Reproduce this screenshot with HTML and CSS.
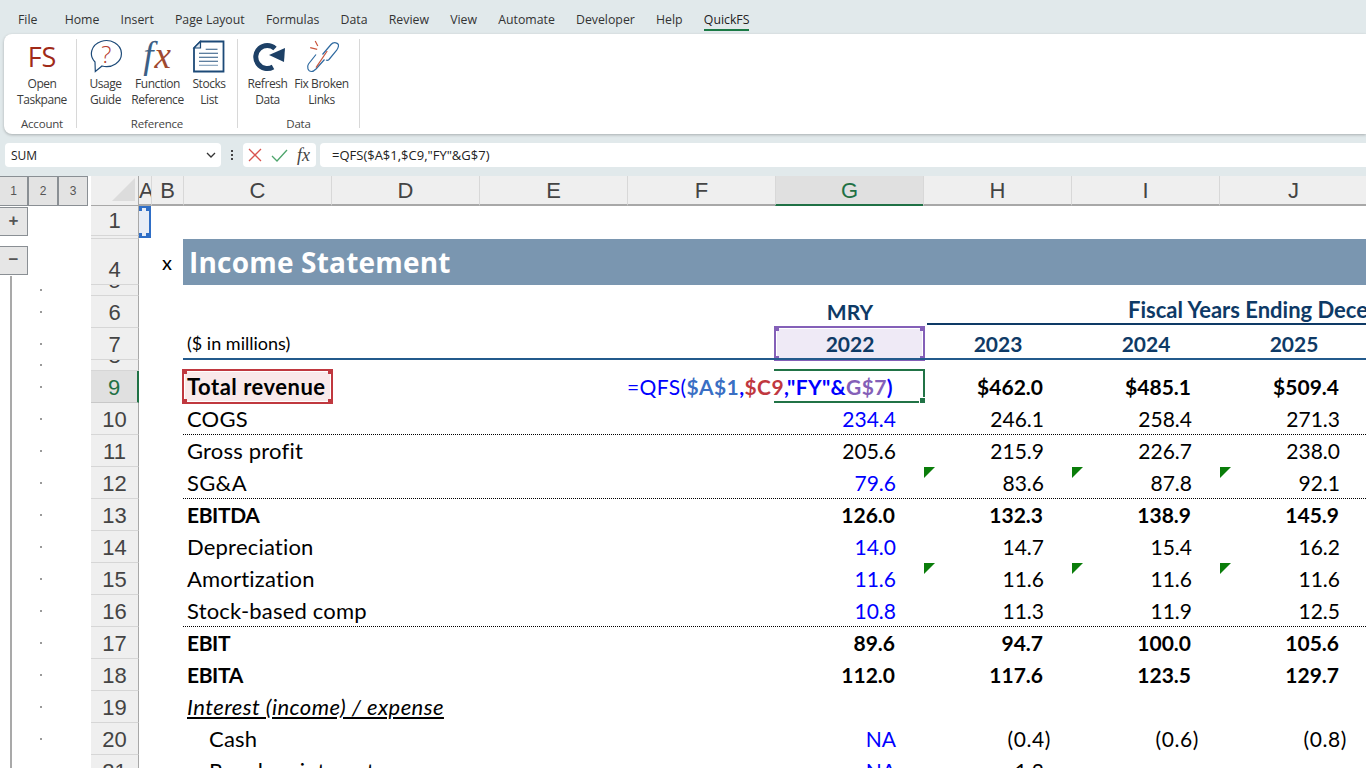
FILE: index.html
```html
<!DOCTYPE html>
<html lang="en">
<head>
<meta charset="utf-8">
<title>Income Statement</title>
<link rel="stylesheet" href="styles.css">
</head>
<body>
<div class="app">
  <nav class="tabs">
    <span class="tab tab-file">File</span><span class="tab">Home</span><span class="tab">Insert</span><span class="tab">Page Layout</span><span class="tab">Formulas</span><span class="tab">Data</span><span class="tab">Review</span><span class="tab">View</span><span class="tab">Automate</span><span class="tab">Developer</span><span class="tab">Help</span><span class="tab tab-active">QuickFS</span>
  </nav>
  <section class="ribbon">
    <div class="group group-account">
      <div class="group-items">
        <div class="rbtn rbtn-open"><span class="icon fs-logo">FS</span><span class="rlabel">Open<br>Taskpane</span></div>
      </div>
      <div class="group-name">Account</div>
    </div>
    <div class="group group-reference">
      <div class="group-items">
        <div class="rbtn rbtn-usage"><span class="icon"><svg width="34" height="34" viewBox="0 0 34 34"><path d="M6 23A15 13 0 1 1 13 27L6.300 32.500Z" fill="#fff" stroke="#1d4a78" stroke-width="1.200"/><text x="17" y="24" class="q-mark">?</text></svg></span><span class="rlabel">Usage<br>Guide</span></div>
        <div class="rbtn rbtn-func"><span class="icon fx-logo"><i class="fx-f">f</i><i class="fx-x">x</i></span><span class="rlabel">Function<br>Reference</span></div>
        <div class="rbtn rbtn-stocks"><span class="icon"><svg width="34" height="34" viewBox="0 0 34 34"><path d="M8.500 2.500H31.500V32.500H2V9Z" fill="#fff" stroke="#1d4a78" stroke-width="1.800"/><path d="M8.500 2.500V9H2Z" fill="#dfe8f0" stroke="#1d4a78" stroke-width="1.200"/><path d="M13.700 10.300H25.500M7 14.300H26M7 18.300H26M7 22.300H26" stroke="#2a5580" stroke-width="1.100"/><path d="M7 26.300H26" stroke="#7f9cb8" stroke-width="1.100"/></svg></span><span class="rlabel">Stocks<br>List</span></div>
      </div>
      <div class="group-name">Reference</div>
    </div>
    <div class="group group-data">
      <div class="group-items">
        <div class="rbtn rbtn-refresh"><span class="icon"><svg width="34" height="34" viewBox="0 0 34 34"><path d="M22 28A11.500 11.500 0 1 1 24 9.500" fill="none" stroke="#1d4066" stroke-width="5"/><path d="M34 9 33 23 18 16Z" fill="#1d4066"/></svg></span><span class="rlabel">Refresh<br>Data</span></div>
        <div class="rbtn rbtn-links"><span class="icon"><svg width="34" height="34" viewBox="0 0 34 34"><g fill="none" stroke="#2f6aa0" stroke-width="1.200"><path d="M17.500 15.500L26 5.500C28.500 2.500 34 3.500 33.500 7C33.300 8.500 32.500 10 31.500 11.500L24 20.500C23 21.500 22 21.500 21 21"/><path d="M11 15.500L3.500 25C1.500 28 3 32.500 6.500 32.500C8.500 32.500 10 31 11 30L19.500 20.500"/></g><path d="M11 28.700L22.200 12" stroke="#c8553d" stroke-width="1.200"/><path d="M5.200 8.700L12.200 10.300M10.200 2L12.800 7" stroke="#c8553d" stroke-width="1.200"/></svg></span><span class="rlabel">Fix Broken<br>Links</span></div>
      </div>
      <div class="group-name">Data</div>
    </div>
  </section>
  <div class="formula-bar">
    <div class="namebox"><span>SUM</span><svg width="10" height="6" viewBox="0 0 10 6"><path d="M1 1l4 4 4-4" fill="none" stroke="#333" stroke-width="1.300"/></svg></div>
    <div class="fb-dots"><b></b><b></b><b></b></div>
    <div class="fb-buttons">
      <svg width="14" height="14" viewBox="0 0 14 14"><path d="M1 1l12 12M13 1L1 13" stroke="#d9534f" stroke-width="1.300" fill="none"/></svg>
      <svg width="17" height="13" viewBox="0 0 17 13"><path d="M1 7l5 5L16 1" stroke="#4ea56c" stroke-width="1.300" fill="none"/></svg>
      <span class="fb-fx">fx</span>
    </div>
    <div class="fb-input">=QFS($A$1,$C9,"FY"&amp;G$7)</div>
  </div>
  <main class="sheet">
    <div class="row row-head">
      <div class="outline-levels"><span class="lvl">1</span><span class="lvl">2</span><span class="lvl">3</span></div>
      <div class="corner"></div>
      <div class="col col-a">A</div><div class="col">B</div><div class="col">C</div><div class="col">D</div><div class="col">E</div><div class="col">F</div><div class="col col-sel">G</div><div class="col">H</div><div class="col">I</div><div class="col">J</div>
    </div>

    <div class="row h30">
      <div class="ol"><span class="ol-btn">+</span></div><div class="num">1</div>
      <div class="cell c-a"><span class="hl hl-blue"><i class="hd tl"></i><i class="hd tr"></i><i class="hd bl"></i><i class="hd br"></i></span></div>
    </div>
    <div class="row h3"><div class="ol"></div><div class="num"></div></div>
    <div class="row h46">
      <div class="ol"><span class="ol-btn ol-minus">−</span></div><div class="num num-low">4</div>
      <div class="cell c-b x-mark">x</div>
      <div class="title">Income Statement</div>
    </div>
    <div class="row h11"><div class="ol"><i class="dot dot-top"></i></div><div class="num num-clip"><span>5</span></div></div>
    <div class="row h32">
      <div class="ol"><i class="dot"></i></div><div class="num">6</div>
      <div class="cell c-g hdr">MRY</div>
      <div class="fiscal"><span>Fiscal Years Ending December 31,</span></div>
    </div>
    <div class="row h32">
      <div class="ol"><i class="dot"></i></div><div class="num">7</div>
      <div class="cell c-c units">($ in millions)</div>
      <div class="cell c-g hdr">2022<span class="hl hl-purple"><i class="hd tl"></i><i class="hd tr"></i><i class="hd bl"></i><i class="hd br"></i></span></div>
      <div class="cell c-h hdr">2023</div><div class="cell c-i hdr">2024</div><div class="cell c-j hdr">2025</div>
      <div class="rule-blue"></div>
    </div>
    <div class="row h11"><div class="ol"><i class="dot dot-top"></i></div><div class="num num-clip"><span>8</span></div></div>
    <div class="row h32 bold">
      <div class="ol"><i class="dot"></i></div><div class="num num-sel">9</div>
      <div class="cell c-c total">Total revenue<span class="hl hl-red"><i class="hd tl"></i><i class="hd tr"></i><i class="hd bl"></i><i class="hd br"></i></span></div>
      <div class="cell c-g active"><span class="fm"><span class="f0">=QFS(</span><span class="f1">$A$1</span><span class="f0 b">,</span><span class="f2">$C9</span><span class="f0 b">,"FY"&amp;</span><span class="f3">G$7</span><span class="f0 b">)</span></span><span class="active-box"></span></div>
      <div class="cell c-h v">$462.0</div><div class="cell c-i v">$485.1</div><div class="cell c-j v">$509.4</div>
    </div>
    <div class="row h32 dotted">
      <div class="ol"><i class="dot"></i></div><div class="num">10</div>
      <div class="cell c-c">COGS</div>
      <div class="cell c-g v inp">234.4</div><div class="cell c-h v">246.1</div><div class="cell c-i v">258.4</div><div class="cell c-j v">271.3</div>
    </div>
    <div class="row h32">
      <div class="ol"><i class="dot"></i></div><div class="num">11</div>
      <div class="cell c-c">Gross profit</div>
      <div class="cell c-g v">205.6</div><div class="cell c-h v">215.9</div><div class="cell c-i v">226.7</div><div class="cell c-j v">238.0</div>
    </div>
    <div class="row h32 dotted">
      <div class="ol"><i class="dot"></i></div><div class="num">12</div>
      <div class="cell c-c">SG&amp;A</div>
      <div class="cell c-g v inp">79.6</div><div class="cell c-h v tri">83.6</div><div class="cell c-i v tri">87.8</div><div class="cell c-j v tri">92.1</div>
    </div>
    <div class="row h32 bold">
      <div class="ol"><i class="dot"></i></div><div class="num">13</div>
      <div class="cell c-c">EBITDA</div>
      <div class="cell c-g v">126.0</div><div class="cell c-h v">132.3</div><div class="cell c-i v">138.9</div><div class="cell c-j v">145.9</div>
    </div>
    <div class="row h32">
      <div class="ol"><i class="dot"></i></div><div class="num">14</div>
      <div class="cell c-c">Depreciation</div>
      <div class="cell c-g v inp">14.0</div><div class="cell c-h v">14.7</div><div class="cell c-i v">15.4</div><div class="cell c-j v">16.2</div>
    </div>
    <div class="row h32">
      <div class="ol"><i class="dot"></i></div><div class="num">15</div>
      <div class="cell c-c">Amortization</div>
      <div class="cell c-g v inp">11.6</div><div class="cell c-h v tri">11.6</div><div class="cell c-i v tri">11.6</div><div class="cell c-j v tri">11.6</div>
    </div>
    <div class="row h32 dotted">
      <div class="ol"><i class="dot"></i></div><div class="num">16</div>
      <div class="cell c-c">Stock-based comp</div>
      <div class="cell c-g v inp">10.8</div><div class="cell c-h v">11.3</div><div class="cell c-i v">11.9</div><div class="cell c-j v">12.5</div>
    </div>
    <div class="row h32 bold">
      <div class="ol"><i class="dot"></i></div><div class="num">17</div>
      <div class="cell c-c">EBIT</div>
      <div class="cell c-g v">89.6</div><div class="cell c-h v">94.7</div><div class="cell c-i v">100.0</div><div class="cell c-j v">105.6</div>
    </div>
    <div class="row h32 bold">
      <div class="ol"><i class="dot"></i></div><div class="num">18</div>
      <div class="cell c-c">EBITA</div>
      <div class="cell c-g v">112.0</div><div class="cell c-h v">117.6</div><div class="cell c-i v">123.5</div><div class="cell c-j v">129.7</div>
    </div>
    <div class="row h32">
      <div class="ol"><i class="dot"></i></div><div class="num">19</div>
      <div class="cell c-c sect">Interest (income) / expense</div>
    </div>
    <div class="row h32">
      <div class="ol"><i class="dot"></i></div><div class="num">20</div>
      <div class="cell c-c ind">Cash</div>
      <div class="cell c-g v inp">NA</div><div class="cell c-h v par">(0.4)</div><div class="cell c-i v par">(0.6)</div><div class="cell c-j v par">(0.8)</div>
    </div>
    <div class="row h32">
      <div class="ol"></div><div class="num">21</div>
      <div class="cell c-c ind">Revolver interest</div>
      <div class="cell c-g v inp">NA</div><div class="cell c-h v">1.2</div>
    </div>
    <div class="outline-line"></div>
  </main>
</div>
</body>
</html>
```
FILE: styles.css
```css
* { box-sizing: border-box; }
html, body { margin: 0; padding: 0; }
body { width: 1366px; height: 768px; overflow: hidden; background: #e1e9eb; }
.app { width: 1366px; height: 768px; overflow: hidden; display: flex; flex-direction: column; font-family: "Open Sans", "Noto Sans", sans-serif; }

.tabs { height: 34px; flex: none; display: flex; align-items: flex-start; gap: 21.200px; padding: 11px 0 0 18px; font-size: 12.300px; line-height: 17px; color: #333; }
.tab { display: block; height: 20px; white-space: nowrap; }
.tab-file { margin-right: 6px; }
.tab-active { color: #222; border-bottom: 2px solid #1a7a45; }

.ribbon { height: 100px; flex: none; margin-left: 4px; background: #fff; border-radius: 8px 0 0 8px; box-shadow: 0 1px 3px rgba(0,0,0,.25); display: flex; padding: 5px 0 0; font-size: 12px; color: #3b3b3b; letter-spacing: -0.450px; }
.group { display: flex; flex-direction: column; align-items: center; height: 89px; border-right: 1px solid #d8d8d8; }
.group-account { width: 73px; padding-left: 4px; }
.group-reference { width: 161px; }
.group-data { width: 122px; }
.group-items { flex: none; height: 78px; display: flex; width: 100%; }
.group-name { font-size: 11.500px; line-height: 14px; color: #444; letter-spacing: -0.200px; }
.rbtn { display: flex; flex-direction: column; align-items: center; }
.rlabel { display: block; text-align: center; line-height: 16px; white-space: nowrap; margin-top: 3px; }
.icon { display: flex; height: 34px; align-items: center; justify-content: center; }
.rbtn-open { width: 69px; }
.rbtn-usage { width: 55px; margin-left: 1px; }
.rbtn-func { width: 49px; }
.rbtn-stocks { width: 54px; }
.rbtn-refresh { width: 47px; margin-left: 6px; }
.rbtn-links { width: 61px; }
.fs-logo { font-size: 27px; color: #a02a18; font-weight: 400; letter-spacing: 0; }
.fx-logo { font-family: "Liberation Serif", serif; font-size: 37px; line-height: 34px; letter-spacing: 1px; }
.fx-f { color: #3d5f85; }
.fx-x { color: #a0492f; }
.q-mark { font-family: "Open Sans", sans-serif; font-size: 24px; font-weight: 300; fill: #b5402f; text-anchor: middle; }

.formula-bar { flex: none; height: 42px; display: flex; align-items: flex-start; padding: 9px 0 0 5px; }
.namebox { width: 216px; height: 24px; background: #fff; border-radius: 4px; display: flex; align-items: center; justify-content: space-between; padding: 0 5px 0 6px; font-size: 12px; color: #222; }
.fb-dots { width: 22px; height: 24px; display: flex; flex-direction: column; align-items: center; justify-content: center; gap: 2px; }
.fb-dots b { display: block; width: 2px; height: 2px; background: #444; }
.fb-buttons { width: 73px; height: 24px; background: #fff; border-radius: 4px; display: flex; align-items: center; gap: 9px; padding-left: 5px; }
.fb-fx { font-family: "Liberation Serif", serif; font-style: italic; font-size: 18px; color: #444; }
.fb-input { flex: 1; margin-left: 4px; height: 24px; background: #fff; border-radius: 4px 0 0 4px; padding-left: 12px; font-size: 13px; line-height: 24px; color: #222; font-family: "Open Sans", sans-serif; }

.sheet { flex: 1; background: #fff; position: relative; z-index: 0; font-family: Lato, sans-serif; font-size: 21px; color: #000; }
.row { display: grid; grid-template-columns: 91px 48px 12px 32px repeat(8, 148px); grid-template-rows: minmax(0, 1fr); position: relative; }
.h30 { height: 30px; }
.h3 { height: 3px; }
.h46 { height: 46px; }
.h11 { height: 11px; }
.h32 { height: 32px; }
.row-head { height: 30px; background: #e1e9eb; }

.outline-levels { display: flex; background: #fff; font-family: "Liberation Sans", sans-serif; font-size: 12px; color: #555; }
.lvl { flex: none; width: 30px; height: 30px; background: #e3e3e3; border: 1px solid #8a8f94; display: flex; align-items: center; justify-content: center; }
.outline-levels .lvl:first-child { width: 28px; border-left: 0; }
.corner { background: #efefef; border-right: 1px solid #a8a8a8; border-bottom: 1px solid #a8a8a8; position: relative; }
.corner::after { content: ""; position: absolute; right: 3px; top: 2px; border-style: solid; border-width: 0 0 23px 23px; border-color: transparent transparent #dcdcdc transparent; }
.col { background: #efefef; border-left: 1px solid #d8d8d8; border-bottom: 2px solid #a8a8a8; font-family: "Liberation Sans", sans-serif; font-size: 22px; line-height: 30px; text-align: center; color: #444; overflow: hidden; }
.col-a { border-left: 0; text-align: left; }
.col-sel { background: #e0e0e0; color: #1f7145; border-bottom-color: #1f7145; }

.ol { grid-column: 1; grid-row: 1; position: relative; background: #fff; }
.dot { position: absolute; left: 40px; top: 15px; width: 2px; height: 2px; background: #9a9a9a; }
.dot-top { top: 4px; }
.ol-btn { position: absolute; left: 0; top: 1px; width: 28px; height: 29px; background: #e6e6e6; border: 1px solid #8a8f94; border-left: 0; font-family: "Liberation Sans", sans-serif; font-weight: 700; font-size: 17px; line-height: 26px; text-align: center; color: #555; }
.ol-minus { top: 7px; }
.outline-line { position: absolute; left: 10px; top: 100px; bottom: 0; width: 2px; background: #a9a9a9; }

.num { grid-column: 2; grid-row: 1; background: #efefef; border-right: 1px solid #a8a8a8; border-bottom: 1px solid #d6d6d6; font-family: "Liberation Sans", sans-serif; font-size: 22px; line-height: 30px; text-align: center; color: #444; overflow: hidden; }
.h32 .num { line-height: 33px; }
.num-low { line-height: 62px; }
.num-clip { line-height: 0; }
.num-clip span { display: block; margin-top: -4px; }
.num-sel { background: #e0e0e0; color: #1f7145; border-right: 2px solid #1f7145; border-bottom: 1px solid #c8c8c8; }

.cell { grid-row: 1; position: relative; white-space: nowrap; line-height: 32px; }
.c-a { grid-column: 3; }
.c-b { grid-column: 4; }
.c-c { grid-column: 5; padding-left: 4px; font-size: 22px; letter-spacing: 0.200px; }
.c-g { grid-column: 9; }
.c-h { grid-column: 10; }
.c-i { grid-column: 11; }
.c-j { grid-column: 12; }
.bold .cell { font-weight: 700; }
.bold .c-c { font-size: 21px; letter-spacing: -0.400px; }
.bold .total { font-size: 22px; letter-spacing: 0.500px; }
.units { font-size: 18px; letter-spacing: 0; line-height: 31px; }
.v { text-align: right; padding-right: 27px; }
.bold .v { padding-right: 28px; }
.par { padding-right: 20px; letter-spacing: 0.600px; }
.inp { color: #0000ff; }
.hdr { text-align: center; font-weight: 700; color: #0e3a66; padding-left: 2px; }
.ind { padding-left: 26px; }
.sect { font-style: italic; text-decoration: underline; letter-spacing: 0.450px; }
.x-mark { text-align: center; font-size: 20px; line-height: 47px; }

.title { grid-column: 5 / -1; grid-row: 1; background: #7a96b0; color: #fff; font-family: "Open Sans", sans-serif; font-weight: 700; font-size: 28px; letter-spacing: 0.200px; line-height: 46px; padding-left: 6px; }
.fiscal { grid-column: 10 / -1; grid-row: 1; margin-left: 4px; height: 29px; border-bottom: 2px solid #0e3a66; overflow: hidden; white-space: nowrap; font-weight: 700; color: #0e3a66; line-height: 27px; padding-left: 201px; font-size: 22px; }
.rule-blue { grid-column: 5 / -1; grid-row: 1; align-self: end; height: 2px; background: #235a8c; }
.dotted::after { content: ""; grid-column: 5 / -1; grid-row: 1; align-self: end; height: 1px; background-image: repeating-linear-gradient(90deg, #000 0 1px, transparent 1px 2px); }
.tri::before { content: ""; position: absolute; left: 1px; top: 0; border-style: solid; border-width: 11px 11px 0 0; border-color: #0a7d0a transparent transparent transparent; }

.hl { position: absolute; z-index: -1; display: block; }
.hl i { position: absolute; width: 5px; height: 5px; }
.hd.tl { left: -2px; top: -2px; }
.hd.tr { right: -2px; top: -2px; }
.hd.bl { left: -2px; bottom: -2px; }
.hd.br { right: -2px; bottom: -2px; }
.hl-blue { left: 0; top: 0; height: 32px; width: 12px; background: #e8edf6; border: 2px solid #2f6ec6; border-left: 0; }
.hl-blue i { background: #2f6ec6; }
.hl-purple { left: -1px; right: -2px; top: -2px; bottom: -1px; background: #efeaf6; border: 2px solid #8460b8; outline: 1px solid #fff; outline-offset: -3px; }
.hl-purple i { background: #8460b8; }
.hl-red { left: -1px; right: -2px; top: -2px; bottom: -1px; background: #f9e9ea; border: 2px solid #c0383f; outline: 1px solid #fff; outline-offset: -3px; }
.hl-red i { background: #c0383f; }

.active { display: flex; justify-content: flex-end; padding-right: 30px; }
.fm { display: block; white-space: nowrap; letter-spacing: 0.400px; }
.f0 { color: #0000ff; font-weight: 400; }
.f0.b { font-weight: 700; }
.f1 { color: #3a6fc4; }
.f2 { color: #c0383f; }
.f3 { color: #8460b8; }
.active-box { position: absolute; left: -1px; right: -2px; top: -2px; bottom: 0; border: 2px solid #217346; border-left: 0; pointer-events: none; }
.active-box::after { content: ""; position: absolute; right: -3px; bottom: -3px; width: 5px; height: 5px; background: #217346; border: 1px solid #fff; }
```
